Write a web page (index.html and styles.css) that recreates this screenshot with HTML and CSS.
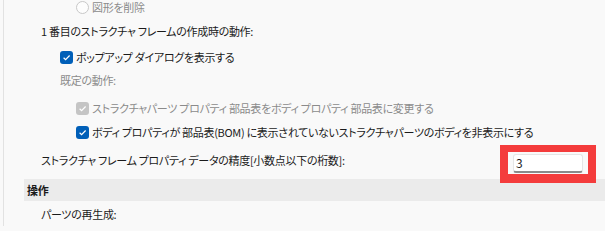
FILE: index.html
```html
<!DOCTYPE html>
<html lang="ja">
<head>
  <meta charset="UTF-8" />
  <title>オプション</title>
  <link rel="stylesheet" href="styles.css">
</head>
<body>
  <div class="pane">
    <div class="row r1 ind-76 muted">
      <span class="radio"></span>
      <span>図形を削除</span>
    </div>

    <div class="row r2 ind-41">1 番目のストラクチャ フレームの作成時の動作:</div>

    <div class="row r3 ind-60">
      <span class="check on">
        <svg viewBox="0 0 13 13"><path d="M3.6 6.8 L5.6 8.7 L9.6 4.5" /></svg>
      </span>
      <span>ポップアップ ダイアログを表示する</span>
    </div>

    <div class="row r4 ind-60 muted">既定の動作:</div>

    <div class="row r5 ind-76 muted">
      <span class="check disabled">
        <svg viewBox="0 0 13 13"><path d="M3.6 6.8 L5.6 8.7 L9.6 4.5" /></svg>
      </span>
      <span>ストラクチャパーツ プロパティ 部品表をボディ プロパティ 部品表に変更する</span>
    </div>

    <div class="row r6 ind-76">
      <span class="check on">
        <svg viewBox="0 0 13 13"><path d="M3.6 6.8 L5.6 8.7 L9.6 4.5" /></svg>
      </span>
      <span>ボディ プロパティが 部品表(BOM) に表示されていないストラクチャパーツのボディを非表示にする</span>
    </div>

    <div class="row r7 ind-41">
      <span>ストラクチャ フレーム プロパティ データの精度[小数点以下の桁数]:</span>
      <span class="field">
        <input class="num" value="3" />
        <span class="mark"></span>
      </span>
    </div>

    <div class="section">操作</div>

    <div class="row r9 ind-41">パーツの再生成:</div>
  </div>
</body>
</html>
```

FILE: styles.css
```css
:root {
  --bg: #f9f9f9;
  --text: #1b1b1b;
  --muted: #8b8b8b;
  --accent: #005fb8;
  --band: #ebebeb;
  --line: #e2e2e2;
  --font: "Noto Sans CJK JP", "Noto Sans", sans-serif;
}

html, body {
  margin: 0;
  height: 100%;
  overflow: hidden;
  background: var(--bg);
}

body {
  font-family: var(--font);
  font-size: 11px;
  letter-spacing: -0.3px;
  font-feature-settings: "palt";
  color: var(--text);
}

.pane {
  margin-left: 3px;
  border-left: 1px solid var(--line);
  height: 100%;
}

.row {
  display: flex;
  align-items: center;
  height: 24px;
  white-space: nowrap;
}

.ind-41 { padding-left: 37px; }
.ind-60 { padding-left: 56px; }
.ind-76 { padding-left: 72px; }

.muted { color: var(--muted); }

.r1 { margin-top: -5px; }
.r3 { margin-top: 2px; }
.r4 { height: 22px; }
.r5 { margin-top: 5px; }
.r7 { margin-top: 4px; padding-right: 22px; justify-content: space-between; }
.r9 { margin-top: 1px; }

.radio {
  width: 11px;
  height: 11px;
  border: 1px solid #c8c8c8;
  border-radius: 50%;
  background: #fdfdfd;
  margin-right: 3px;
}

.check {
  width: 13px;
  height: 13px;
  border-radius: 3px;
  margin-right: 3px;
  display: flex;
}

.check svg {
  width: 13px;
  height: 13px;
  fill: none;
  stroke: #fff;
  stroke-width: 1.2;
}

.check.on { background: var(--accent); }
.check.disabled { background: #c5c5c5; }

.field {
  position: relative;
  display: flex;
  margin-top: 6px;
}

.num {
  width: 66px;
  height: 16px;
  padding: 0 0 0 2px;
  border: 1px solid #e5e5e5;
  border-bottom: 2px solid #8a8a8a;
  border-radius: 3px;
  background: #fff;
  font-family: var(--font);
  font-size: 12px;
  color: var(--text);
  outline: none;
}

/* red annotation frame */
.mark {
  position: absolute;
  left: -13px;
  top: -9px;
  right: -13px;
  bottom: -10px;
  border: 8px solid #f43c3c;
  border-top-width: 7px;
  border-bottom-width: 9px;
  z-index: 2;
}

.section {
  margin: 7px 0 0 20px;
  height: 22px;
  padding-left: 3px;
  display: flex;
  align-items: center;
  background: var(--band);
  font-weight: bold;
  position: relative;
  z-index: 1;
}
```
